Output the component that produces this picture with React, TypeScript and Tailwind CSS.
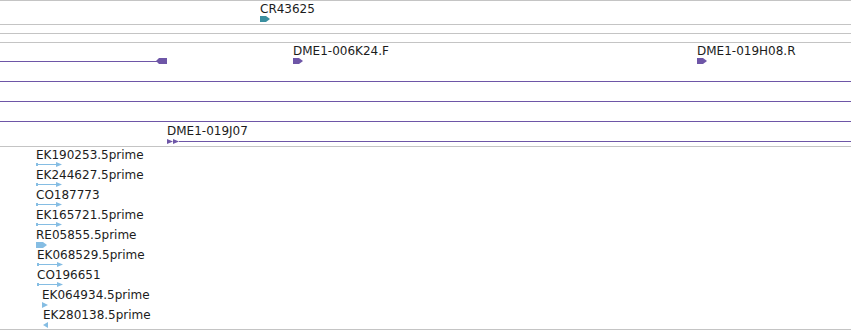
import React from "react";

// feature colours
const PURPLE = "#6e56a7";
const BLUE = "#85bde3";
const TEAL = "#3a8f9f";

type Est = {
  name: string;
  pad: string;
  glyph: "arrow" | "block" | "tri" | "ltri";
};

const ests: Est[] = [
  { name: "EK190253.5prime", pad: "pl-[36px]", glyph: "arrow" },
  { name: "EK244627.5prime", pad: "pl-[36px]", glyph: "arrow" },
  { name: "CO187773", pad: "pl-[36px]", glyph: "arrow" },
  { name: "EK165721.5prime", pad: "pl-[36px]", glyph: "arrow" },
  { name: "RE05855.5prime", pad: "pl-[36px]", glyph: "block" },
  { name: "EK068529.5prime", pad: "pl-[37px]", glyph: "arrow" },
  { name: "CO196651", pad: "pl-[37px]", glyph: "arrow" },
  { name: "EK064934.5prime", pad: "pl-[42px]", glyph: "tri" },
  { name: "EK280138.5prime", pad: "pl-[43px]", glyph: "ltri" },
];

const font = "shrink-0 text-[12px] leading-[14px] text-[#1c1c1c] font-['DejaVu_Sans',sans-serif] whitespace-nowrap";

const RightBlock = () => (
  <svg width="10" height="6" viewBox="0 0 10 6" className="block shrink-0">
    <polygon points="0,0 6,0 10,3 6,6 0,6" fill={PURPLE} />
  </svg>
);

const EstGlyph = ({ glyph }: { glyph: Est["glyph"] }) => {
  if (glyph === "arrow") {
    return (
      <svg width="27" height="7" viewBox="0 0 27 7" className="block shrink-0 -mt-px">
        <rect x="0" y="2" width="2" height="3" fill={BLUE} />
        <rect x="0" y="3" width="22" height="1" fill={BLUE} />
        <polygon points="20,1 26,3.5 20,6" fill={BLUE} />
      </svg>
    );
  }
  if (glyph === "block") {
    return (
      <svg width="11" height="6" viewBox="0 0 11 6" className="block shrink-0">
        <polygon points="0,0 7,0 11,3 7,6 0,6" fill={BLUE} />
      </svg>
    );
  }
  if (glyph === "tri") {
    return (
      <svg width="7" height="6" viewBox="0 0 7 6" className="block shrink-0">
        <polygon points="0,0 6,3 0,6" fill={BLUE} />
      </svg>
    );
  }
  return (
    <svg width="5" height="6" viewBox="0 0 5 6" className="block shrink-0">
      <polygon points="5,0 0,3 5,6" fill={BLUE} />
    </svg>
  );
};

const App = () => {
  return (
    <div className="w-[851px] h-[330px] bg-white overflow-hidden flex flex-col">
      {/* gene track */}
      <div className="h-[24px] border-t border-[#c4c4c4] shrink-0 pl-[260px] pt-px flex flex-col items-start">
        <span className={font}>CR43625</span>
        <svg width="10" height="6" viewBox="0 0 10 6" className="block shrink-0">
          <polygon points="0,0 6,0 10,3 6,6 0,6" fill={TEAL} />
        </svg>
      </div>
      <div className="h-[9px] border-t border-[#c4c4c4] shrink-0" />
      <div className="h-[9px] border-t border-[#c4c4c4] shrink-0" />

      {/* clone ends track */}
      <div className="h-[104px] border-t border-[#c4c4c4] shrink-0 flex flex-col">
        <div className="relative h-[38px] shrink-0">
          <div className="absolute left-0 top-[18px] w-[157px] h-px bg-[#6e56a7]" />
          <svg width="11" height="6" viewBox="0 0 11 6" className="absolute left-[156px] top-[15px]">
            <polygon points="0,3 3,0 11,0 11,6 3,6" fill={PURPLE} />
          </svg>
          <div className="absolute left-[293px] top-px flex flex-col items-start">
            <span className={font}>DME1-006K24.F</span>
            <RightBlock />
          </div>
          <div className="absolute left-[697px] top-px flex flex-col items-start">
            <span className={font}>DME1-019H08.R</span>
            <RightBlock />
          </div>
        </div>
        <div className="h-[20px] border-t border-[#6e56a7] shrink-0" />
        <div className="h-[20px] border-t border-[#6e56a7] shrink-0" />
        <div className="h-[26px] border-t border-[#6e56a7] shrink-0 pl-[167px] pt-[2px] flex flex-col">
          <span className={font}>DME1-019J07</span>
          <div className="flex items-center h-[5px] mt-px shrink-0">
            <svg width="12" height="5" viewBox="0 0 12 5" className="block shrink-0">
              <polygon points="0,0 6,2.5 0,5" fill={PURPLE} />
              <polygon points="6,0 12,2.5 6,5" fill={PURPLE} />
            </svg>
            <div className="flex-1 h-px bg-[#6e56a7]" />
          </div>
        </div>
      </div>

      {/* EST track */}
      <div className="h-[183px] border-t border-[#c4c4c4] shrink-0 pt-px flex flex-col">
        {ests.map((est) => (
          <div key={est.name} className={`h-[20px] shrink-0 flex flex-col items-start ${est.pad}`}>
            <span className={font}>{est.name}</span>
            <EstGlyph glyph={est.glyph} />
          </div>
        ))}
      </div>
      <div className="border-t border-[#c4c4c4] shrink-0" />
    </div>
  );
};

export default App;
